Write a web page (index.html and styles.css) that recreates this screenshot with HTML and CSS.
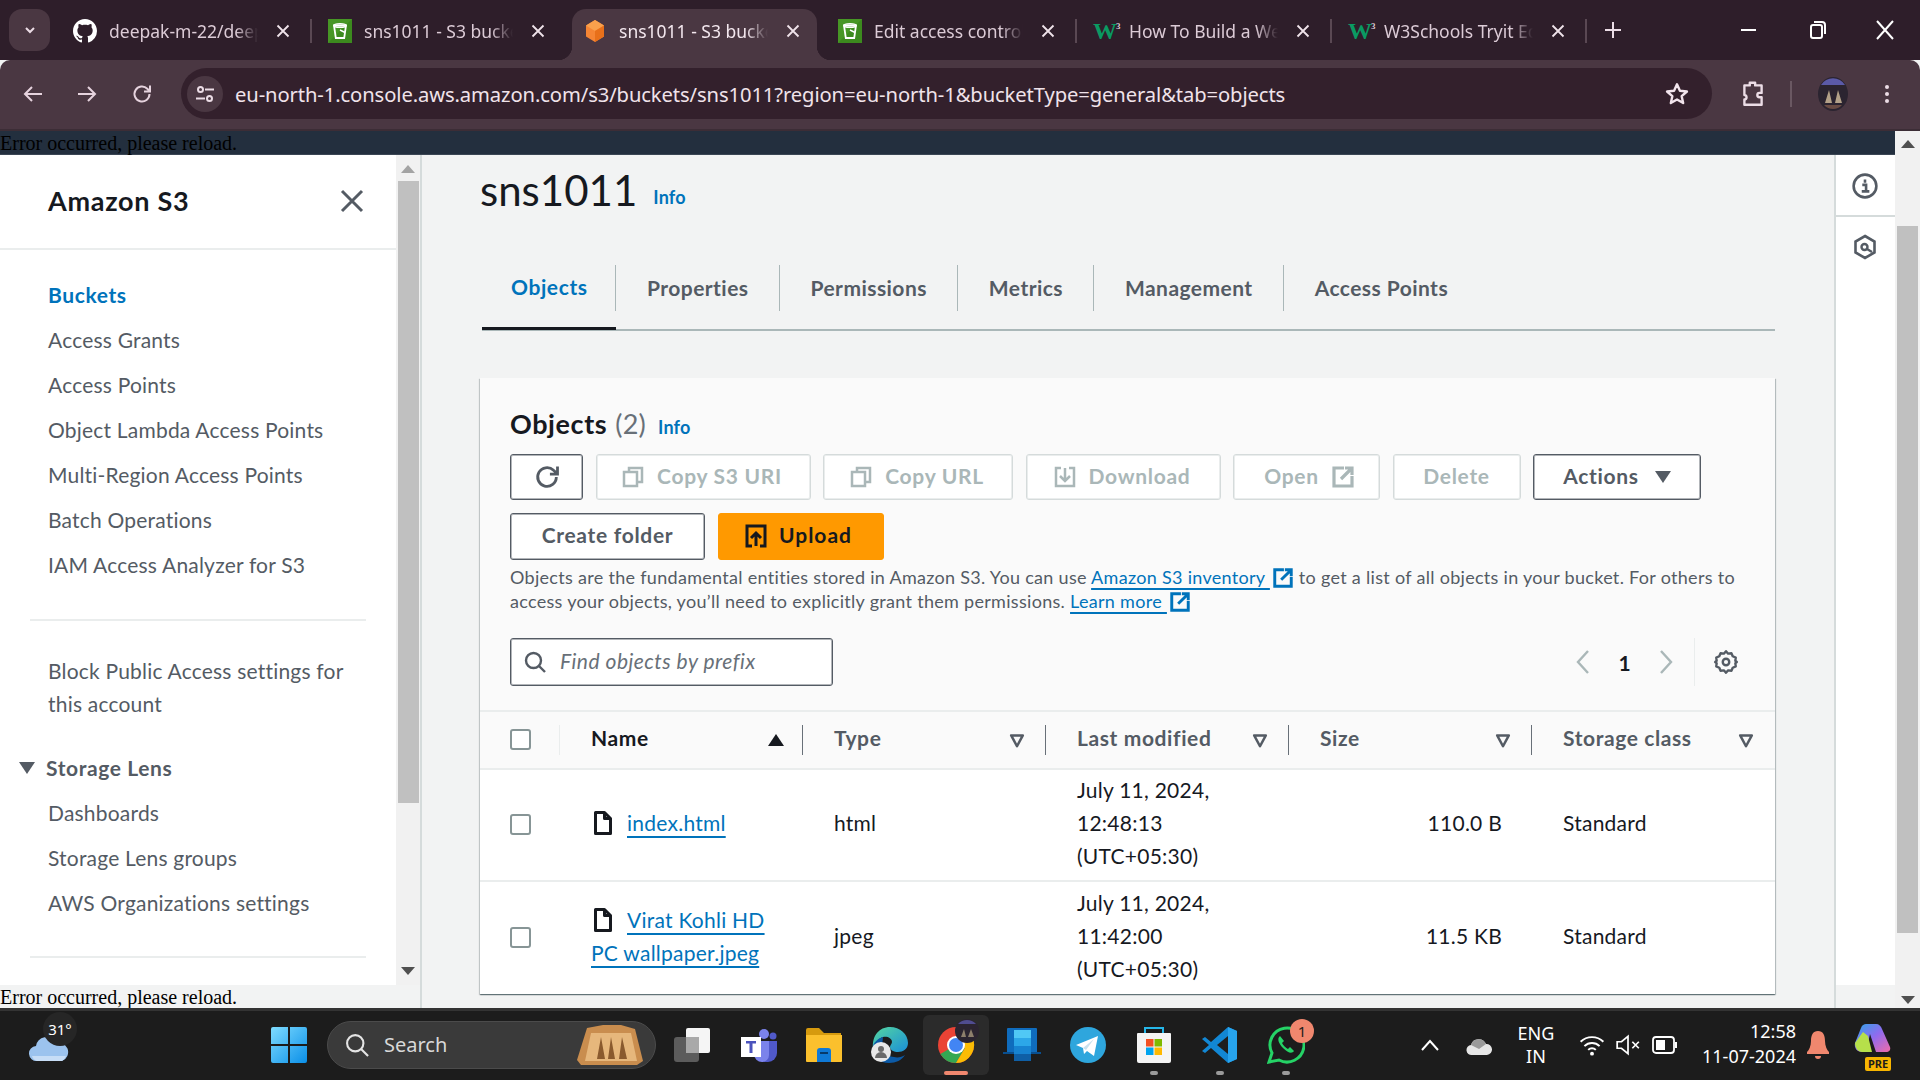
FILE: index.html
```html
<!DOCTYPE html>
<html lang="en">
<head>
<meta charset="utf-8">
<title>sns1011 - S3 bucket</title>
<link rel="stylesheet" href="styles.css">
</head>
<body>
<svg class="defs" width="0" height="0" aria-hidden="true">
  <symbol id="x" viewBox="0 0 24 24"><path d="M6 6l12 12M18 6L6 18" fill="none" stroke="currentColor" stroke-width="2"/></symbol>
  <symbol id="s3" viewBox="0 0 24 24"><rect width="24" height="24" fill="#3c8a1e"/><path d="M0 0h24L0 24z" fill="#4f9f2a" opacity=".6"/><path d="M6 6.5h12l-1.8 12.5H7.800z" fill="none" stroke="#fff" stroke-width="1.800"/><ellipse cx="12" cy="6.500" rx="6" ry="1.800" fill="none" stroke="#fff" stroke-width="1.600"/><path d="M12 11l5 2.500" stroke="#fff" stroke-width="1.500"/></symbol>
  <symbol id="sort" viewBox="0 0 24 24"><path d="M5 6.500h14L12 19.500z" fill="none" stroke="currentColor" stroke-width="3" stroke-linejoin="round"/></symbol>
  <symbol id="file" viewBox="0 0 18 24"><path d="M1.500 1.500h9l6 6v15h-15z M10.500 1.500v6h6" fill="none" stroke="#16191f" stroke-width="3" stroke-linejoin="round"/></symbol>
  <symbol id="ext" viewBox="0 0 24 24"><path d="M13 3H3v18h18V11" fill="none" stroke="currentColor" stroke-width="3.200"/><path d="M10 14L20 4M14 3h7v7" fill="none" stroke="currentColor" stroke-width="3.200"/></symbol>
  <symbol id="copy" viewBox="0 0 24 24"><path d="M8 7V3h13v14h-5" fill="none" stroke="currentColor" stroke-width="2.500"/><rect x="3" y="7" width="13" height="14" fill="none" stroke="currentColor" stroke-width="2.500"/></symbol>
</svg>

<header class="tabstrip">
  <button class="tabs-menu"><svg width="14" height="14" viewBox="0 0 14 14"><path d="M3 5l4 4 4-4" fill="none" stroke="#ecdde6" stroke-width="2"/></svg></button>
  <div class="tab">
    <svg class="fav" viewBox="0 0 16 16"><path fill="#fff" d="M8 0C3.580 0 0 3.580 0 8c0 3.540 2.290 6.530 5.470 7.590.4.070.55-.17.55-.38 0-.19-.01-.82-.01-1.490-2.010.37-2.530-.49-2.690-.94-.09-.23-.48-.94-.82-1.130-.28-.15-.68-.52-.01-.53.63-.01 1.080.58 1.230.82.720 1.210 1.870.87 2.330.66.070-.52.280-.87.510-1.070-1.780-.2-3.640-.89-3.640-3.950 0-.87.310-1.590.82-2.150-.08-.2-.36-1.020.08-2.120 0 0 .67-.21 2.200.82.640-.18 1.320-.27 2-.27s1.360.09 2 .27c1.530-1.040 2.200-.82 2.200-.82.44 1.100.16 1.920.08 2.120.51.560.82 1.270.82 2.150 0 3.070-1.870 3.750-3.650 3.950.29.250.54.730.54 1.480 0 1.070-.01 1.930-.01 2.200 0 .21.150.46.550.38A8.010 8.010 0 0 0 16 8c0-4.420-3.580-8-8-8z"/></svg>
    <span class="tab-title">deepak-m-22/deepak</span>
    <svg class="tab-x"><use href="#x"/></svg>
  </div>
  <div class="tab">
    <svg class="fav"><use href="#s3"/></svg>
    <span class="tab-title">sns1011 - S3 bucket</span>
    <svg class="tab-x"><use href="#x"/></svg>
  </div>
  <div class="tab active">
    <svg class="fav" viewBox="0 0 24 24"><path d="M12 1l9 5.500v11L12 23l-9-5.500v-11z" fill="#f58534"/><path d="M12 1l9 5.500L12 12 3 6.500z" fill="#f9a04c"/><path d="M12 12l9-5.500v11L12 23z" fill="#e8701a"/></svg>
    <span class="tab-title">sns1011 - S3 bucket</span>
    <svg class="tab-x"><use href="#x"/></svg>
  </div>
  <div class="tab">
    <svg class="fav"><use href="#s3"/></svg>
    <span class="tab-title">Edit access control list</span>
    <svg class="tab-x"><use href="#x"/></svg>
  </div>
  <div class="tab">
    <span class="fav w3">W<sup>3</sup></span>
    <span class="tab-title">How To Build a Website</span>
    <svg class="tab-x"><use href="#x"/></svg>
  </div>
  <div class="tab">
    <span class="fav w3">W<sup>3</sup></span>
    <span class="tab-title">W3Schools Tryit Editor</span>
    <svg class="tab-x"><use href="#x"/></svg>
  </div>
  <svg class="newtab" width="24" height="24" viewBox="0 0 24 24"><path d="M12 4v16M4 12h16" stroke="#ecdde6" stroke-width="2"/></svg>
  <div class="winctl">
    <svg width="24" height="24" viewBox="0 0 24 24"><path d="M4 12h15" stroke="#fff" stroke-width="2"/></svg>
    <svg width="24" height="24" viewBox="0 0 24 24"><rect x="6" y="7" width="11" height="13" rx="2" fill="none" stroke="#fff" stroke-width="2"/><path d="M9 4h8a3 3 0 0 1 3 3v9" fill="none" stroke="#fff" stroke-width="2"/></svg>
    <svg width="24" height="24" viewBox="0 0 24 24"><path d="M4 3l16 18M20 3L4 21" stroke="#fff" stroke-width="2"/></svg>
  </div>
</header>

<nav class="toolbar">
  <svg class="tool-ic" viewBox="0 0 24 24"><path d="M21 12H4M11 5l-7 7 7 7" fill="none" stroke="#e6d3de" stroke-width="2"/></svg>
  <svg class="tool-ic" viewBox="0 0 24 24"><path d="M3 12h17M13 5l7 7-7 7" fill="none" stroke="#e6d3de" stroke-width="2"/></svg>
  <svg class="tool-ic" viewBox="0 0 24 24"><path d="M19.500 12a7.500 7.500 0 1 1-2.200-5.300L20 9.400M20 3.500v6h-6" fill="none" stroke="#e6d3de" stroke-width="2"/></svg>
  <div class="omnibox">
    <span class="tune"><svg width="24" height="24" viewBox="0 0 24 24"><circle cx="7.500" cy="7.500" r="2.500" fill="none" stroke="#ecdde6" stroke-width="2"/><path d="M12 7.500h9M3 16.500h9" stroke="#ecdde6" stroke-width="2"/><circle cx="16.500" cy="16.500" r="2.500" fill="none" stroke="#ecdde6" stroke-width="2"/></svg></span>
    <span class="url">eu-north-1.console.aws.amazon.com/s3/buckets/sns1011?region=eu-north-1&amp;bucketType=general&amp;tab=objects</span>
    <svg class="star" width="26" height="26" viewBox="0 0 24 24"><path d="M12 3l2.700 6 6.500.7-4.900 4.300 1.400 6.400L12 17l-5.700 3.400 1.400-6.400-4.900-4.300 6.500-.7z" fill="none" stroke="#f2e4ec" stroke-width="2.200" stroke-linejoin="round"/></svg>
  </div>
  <svg class="ext-puzzle" width="26" height="28" viewBox="0 0 24 26"><path d="M4 5h5V2.500h5V5h6v7h-2a2 2 0 0 0 0 4h2v7H4v-5a2 2 0 0 0 0-4V5z" fill="none" stroke="#ecdde6" stroke-width="2.200" stroke-linejoin="round"/></svg>
  <span class="tool-sep"></span>
  <svg class="avatar" width="30" height="36" viewBox="0 0 30 36"><ellipse cx="15" cy="18" rx="15" ry="17" fill="#2b2430"/><path d="M3 9a14 14 0 0 1 24 0z" fill="#5b5aa8"/><path d="M7 27l4-13 3 13zM17 27l3-13 4 13z" fill="#b3a188"/><path d="M6 29a12 12 0 0 0 18 0z" fill="#6a4c44"/></svg>
  <svg class="kebab" width="24" height="24" viewBox="0 0 24 24"><circle cx="12" cy="5" r="2" fill="#ecdde6"/><circle cx="12" cy="12" r="2" fill="#ecdde6"/><circle cx="12" cy="19" r="2" fill="#ecdde6"/></svg>
</nav>

<div class="pagewrap">
  <div class="pagecol">
    <div class="err err-top">Error occurred, please reload.</div>
    <div class="console">
      <aside class="sidecol">
        <div class="sidebody">
          <div class="side">
            <div class="side-head">
              <h2>Amazon S3</h2>
              <svg class="side-x" width="24" height="24" viewBox="0 0 24 24"><path d="M2 2l20 20M22 2L2 22" fill="none" stroke="currentColor" stroke-width="3"/></svg>
            </div>
            <ul class="side-list side-first">
              <li class="on">Buckets</li>
              <li>Access Grants</li>
              <li>Access Points</li>
              <li>Object Lambda Access Points</li>
              <li>Multi-Region Access Points</li>
              <li>Batch Operations</li>
              <li>IAM Access Analyzer for S3</li>
            </ul>
            <hr class="side-hr hr-one">
            <p class="side-block">Block Public Access settings for this account</p>
            <div class="side-group"><svg width="16" height="14" viewBox="0 0 16 14"><path d="M0 1h16L8 13z" fill="#545b64"/></svg><span>Storage Lens</span></div>
            <ul class="side-list">
              <li>Dashboards</li>
              <li>Storage Lens groups</li>
              <li>AWS Organizations settings</li>
            </ul>
            <hr class="side-hr hr-two">
          </div>
          <div class="vscroll side-scroll">
            <svg class="sb-arrow" width="14" height="8" viewBox="0 0 14 8"><path d="M0 8l7-8 7 8z" fill="#a3a3a3"/></svg>
            <div class="thumb"></div>
            <svg class="sb-arrow" width="14" height="8" viewBox="0 0 14 8"><path d="M0 0l7 8 7-8z" fill="#505050"/></svg>
          </div>
        </div>
        <div class="err err-bot">Error occurred, please reload.</div>
      </aside>

      <main class="main">
        <div class="title-row"><h1>sns1011</h1><a class="info info-title">Info</a></div>
        <div class="tabs">
          <div class="stab sel">Objects</div>
          <div class="stab">Properties</div>
          <div class="stab">Permissions</div>
          <div class="stab">Metrics</div>
          <div class="stab">Management</div>
          <div class="stab">Access Points</div>
        </div>
        <section class="card">
          <div class="card-top">
            <div class="obj-head"><h3>Objects</h3><span class="count">(2)</span><a class="info">Info</a></div>
            <div class="btnrow">
              <button class="btn b-refresh"><svg width="28" height="28" viewBox="0 0 24 24"><path d="M20 12a8 8 0 1 1-2.400-5.700L20.500 9M21 3v6.500h-6.500" fill="none" stroke="#545b64" stroke-width="2.400"/></svg></button>
              <button class="btn off b-s3"><svg width="24" height="24"><use href="#copy"/></svg>Copy S3 URI</button>
              <button class="btn off b-url"><svg width="24" height="24"><use href="#copy"/></svg>Copy URL</button>
              <button class="btn off b-dl"><svg width="24" height="24" viewBox="0 0 24 24"><path d="M8 3H3v18h18V3h-5M12 3v12M7 11l5 5 5-5" fill="none" stroke="currentColor" stroke-width="2.500"/></svg>Download</button>
              <button class="btn off b-open">Open<svg width="24" height="24"><use href="#ext"/></svg></button>
              <button class="btn off b-del">Delete</button>
              <button class="btn b-act">Actions<svg width="16" height="14" viewBox="0 0 16 14"><path d="M0 1h16L8 13z" fill="#545b64"/></svg></button>
            </div>
            <div class="btnrow row-two">
              <button class="btn b-folder">Create folder</button>
              <button class="btn b-upload"><svg width="22" height="24" viewBox="0 0 22 24"><path d="M7 22H2V2h18v20h-5M11 22V10M6 14l5-5 5 5" fill="none" stroke="#16191f" stroke-width="3"/></svg>Upload</button>
            </div>
            <p class="desc">Objects are the fundamental entities stored in Amazon S3. You can use <a>Amazon S3 inventory <svg width="22" height="22"><use href="#ext"/></svg></a> to get a list of all objects in your bucket. For others to access your objects, you’ll need to explicitly grant them permissions. <a>Learn more <svg width="22" height="22"><use href="#ext"/></svg></a></p>
            <div class="findrow">
              <div class="find"><svg width="24" height="24" viewBox="0 0 24 24"><circle cx="10.500" cy="10.500" r="7.500" fill="none" stroke="#545b64" stroke-width="2.400"/><path d="M16 16l6 6" stroke="#545b64" stroke-width="2.400"/></svg><span>Find objects by prefix</span></div>
              <div class="pager">
                <svg width="18" height="26" viewBox="0 0 18 26"><path d="M14 2L4 13l10 11" fill="none" stroke="#aab7b8" stroke-width="2.400"/></svg>
                <span>1</span>
                <svg width="18" height="26" viewBox="0 0 18 26"><path d="M4 2l10 11L4 24" fill="none" stroke="#aab7b8" stroke-width="2.400"/></svg>
                <i class="pager-sep"></i>
                <svg width="26" height="26" viewBox="0 0 24 24"><path d="M12 2l2 2.300 3-.4 1.200 2.800 2.800 1.200-.4 3L22 12l-1.400 1.100.4 3-2.800 1.200L17 20.100l-3-.4L12 22l-2-2.300-3 .4-1.200-2.800L3 16.100l.4-3L2 12l1.400-1.100-.4-3 2.800-1.200L7 3.900l3 .4z" fill="none" stroke="#545b64" stroke-width="2.200" stroke-linejoin="round"/><circle cx="12" cy="12" r="3" fill="none" stroke="#545b64" stroke-width="2.200"/></svg>
              </div>
            </div>
          </div>
          <table class="objects">
            <colgroup><col class="c0"><col class="cn"><col class="cn"><col class="cn"><col class="cn"><col class="cn"></colgroup>
            <thead>
              <tr>
                <th class="chk"><span class="box"></span></th>
                <th class="dark"><div class="th-in">Name<svg width="16" height="14" viewBox="0 0 16 14"><path d="M0 13h16L8 1z" fill="#16191f"/></svg></div></th>
                <th><div class="th-in">Type<svg width="20" height="20"><use href="#sort"/></svg></div></th>
                <th><div class="th-in">Last modified<svg width="20" height="20"><use href="#sort"/></svg></div></th>
                <th><div class="th-in">Size<svg width="20" height="20"><use href="#sort"/></svg></div></th>
                <th class="last"><div class="th-in">Storage class<svg width="20" height="20"><use href="#sort"/></svg></div></th>
              </tr>
            </thead>
            <tbody>
              <tr>
                <td class="chk"><span class="box"></span></td>
                <td class="namec"><svg class="fileic" width="18" height="24"><use href="#file"/></svg><a>index.html</a></td>
                <td>html</td>
                <td>July 11, 2024,<br>12:48:13<br>(UTC+05:30)</td>
                <td class="num">110.0 B</td>
                <td>Standard</td>
              </tr>
              <tr>
                <td class="chk"><span class="box"></span></td>
                <td class="namec"><svg class="fileic" width="18" height="24"><use href="#file"/></svg><a>Virat Kohli HD<br>PC wallpaper.jpeg</a></td>
                <td>jpeg</td>
                <td>July 11, 2024,<br>11:42:00<br>(UTC+05:30)</td>
                <td class="num">11.5 KB</td>
                <td>Standard</td>
              </tr>
            </tbody>
          </table>
        </section>
      </main>

      <aside class="rail">
        <div class="rail-in">
          <div class="rail-item bordered"><svg width="26" height="26" viewBox="0 0 24 24"><circle cx="12" cy="12" r="10.500" fill="none" stroke="#545b64" stroke-width="2.400"/><path d="M12 6v3M9.500 11H13v6M9 17h7" fill="none" stroke="#545b64" stroke-width="2.400"/></svg></div>
          <div class="rail-item"><svg width="24" height="26" viewBox="0 0 24 26"><path d="M12 2l9.500 5.500v11L12 24l-9.500-5.500v-11z" fill="none" stroke="#545b64" stroke-width="2.600"/><circle cx="11.500" cy="13" r="3" fill="none" stroke="#545b64" stroke-width="2.400"/><path d="M14 15l5 3" stroke="#545b64" stroke-width="2.400"/></svg></div>
        </div>
      </aside>
    </div>
  </div>
  <div class="vscroll page-scroll">
    <svg class="sb-arrow" width="14" height="8" viewBox="0 0 14 8"><path d="M0 8l7-8 7 8z" fill="#505050"/></svg>
    <div class="thumb"></div>
    <svg class="sb-arrow" width="14" height="8" viewBox="0 0 14 8"><path d="M0 0l7 8 7-8z" fill="#505050"/></svg>
  </div>
</div>

<footer class="taskbar">
  <div class="weather">
    <span class="temp">31°</span>
    <svg width="40" height="36" viewBox="0 0 40 36"><rect x="17" y="4" width="12" height="10" fill="#d9722c"/><path d="M8 34a7.500 7.500 0 0 1-1-15 10 10 0 0 1 19-3 9 9 0 0 1 7 18z" fill="#9cc3ee"/><path d="M8 34a7 7 0 0 1-5-5h34a9 9 0 0 1-4 5z" fill="#c7ddf6"/></svg>
  </div>
  <div class="winlogo"><svg width="36" height="36" viewBox="0 0 36 36"><defs><linearGradient id="wl" x1="0" y1="0" x2="1" y2="1"><stop offset="0" stop-color="#7fdcff"/><stop offset="1" stop-color="#0a8fe8"/></linearGradient></defs><path d="M0 2a2 2 0 0 1 2-2h15v17H0zM19 0h15a2 2 0 0 1 2 2v15H19zM0 19h17v17H2a2 2 0 0 1-2-2zM19 19h17v15a2 2 0 0 1-2 2H19z" fill="url(#wl)"/></svg></div>
  <div class="tbsearch">
    <svg width="28" height="28" viewBox="0 0 24 24"><circle cx="10.500" cy="10.500" r="7" fill="none" stroke="#e4e4e4" stroke-width="1.800"/><path d="M15.500 15.500l6 6" stroke="#e4e4e4" stroke-width="1.800"/></svg>
    <span>Search</span>
    <svg class="relief" width="68" height="40" viewBox="0 0 68 40"><path d="M10 3l16-3h18l14 4 8 32-6 4H4l-4-5z" fill="#c98d4e"/><path d="M14 8h40l6 28H8z" fill="#e6b77c"/><path d="M20 34l4-22 4 22zM31 34l3-22 4 22zM42 34l3-22 5 22z" fill="#8a5a2e"/></svg>
  </div>
  <div class="slot"><svg width="38" height="36" viewBox="0 0 38 36"><rect x="1" y="10" width="25" height="25" rx="3" fill="#5c5c5c"/><rect x="13" y="1" width="24" height="25" rx="2" fill="#f5f5f5"/><rect x="13" y="10" width="13" height="16" fill="#a9a9a9"/></svg></div>
  <div class="slot"><svg width="38" height="36" viewBox="0 0 38 36"><circle cx="25" cy="7" r="5" fill="#7b83eb"/><circle cx="34" cy="9" r="3.500" fill="#5059c9"/><path d="M15 14h23v12a9 9 0 0 1-9 9h-3a11 11 0 0 1-11-11z" fill="#5059c9"/><path d="M15 14h15v14a7 7 0 0 1-7 7 8 8 0 0 1-8-8z" fill="#7b83eb"/><rect x="2" y="10" width="20" height="20" fill="#fff"/><path d="M7 14h10v2.500h-3.500V26h-3v-9.500H7z" fill="#4b53bc"/></svg></div>
  <div class="slot"><svg width="38" height="36" viewBox="0 0 38 36"><path d="M1 3a2 2 0 0 1 2-2h11l5 5h17v8H1z" fill="#d69a0e"/><path d="M1 8h36v26a1 1 0 0 1-1 1H2a1 1 0 0 1-1-1z" fill="#fbc02d"/><path d="M12 24a3 3 0 0 1 3-3h8a3 3 0 0 1 3 3v11H12z" fill="#0f79d6"/><rect x="15" y="25" width="8" height="2" fill="#073a6b"/></svg></div>
  <div class="slot"><svg width="38" height="38" viewBox="0 0 38 38"><defs><linearGradient id="ed" x1="0" y1="0" x2="1" y2="1"><stop offset="0" stop-color="#54d6a0"/><stop offset="1" stop-color="#1a8fd8"/></linearGradient></defs><path d="M19 1c10 0 18 7 18 16 0 6-5 9-10 9-4 0-8-2-8-5 0-2 2-3 2-5 0-4-5-6-9-5C8 12 3 18 2 22 1 10 8 1 19 1z" fill="url(#ed)"/><path d="M2 22c0 9 7 15 16 15 7 0 13-3 16-8-3 2-7 3-11 2C14 30 10 24 12 11 6 13 2 17 2 22z" fill="#0c5aa6"/><circle cx="10" cy="26" r="10" fill="#e8e8e8"/><circle cx="10" cy="23" r="3" fill="#6a6a6a"/><path d="M4 32a6 6 0 0 1 12 0z" fill="#6a6a6a"/></svg></div>
  <div class="slot slot-active">
    <svg width="38" height="38" viewBox="0 0 38 38"><circle cx="19" cy="19" r="18" fill="#ea4335"/><path d="M19 19L3.400 28A18 18 0 0 0 19 37l9-15z" fill="#34a853"/><path d="M19 19l9 3-9 15a18 18 0 0 0 15.600-27H19z" fill="#fbbc04"/><circle cx="19" cy="19" r="9" fill="#fff"/><circle cx="19" cy="19" r="7" fill="#4285f4"/></svg>
    <svg class="chrome-av" width="24" height="24" viewBox="0 0 24 24"><circle cx="12" cy="12" r="12" fill="#2b2430"/><path d="M3 5a12 12 0 0 1 18 0z" fill="#504c90"/><path d="M6 18l3-8 2 8zM13 18l3-8 3 8z" fill="#8d7f6c"/></svg>
    <i class="pill"></i>
  </div>
  <div class="slot"><svg width="38" height="36" viewBox="0 0 38 36"><path d="M5 1h28a1 1 0 0 1 1 1v23H4V2a1 1 0 0 1 1-1z" fill="#0f6cbd"/><rect x="0" y="25" width="38" height="2" fill="#0a4f8f"/><rect x="11" y="3" width="17" height="8" fill="#50c8f5"/><rect x="11" y="11" width="17" height="8" fill="#2ca7e8"/><rect x="11" y="19" width="17" height="8" fill="#1783d1"/><rect x="11" y="27" width="17" height="7" fill="#0f5fa6"/></svg></div>
  <div class="slot"><svg width="36" height="36" viewBox="0 0 36 36"><circle cx="18" cy="18" r="18" fill="#2ea6dd"/><path d="M6 18l22-9-4 20-7-5-3 3-1-6z" fill="#fff"/><path d="M13 21l11-9-8 11z" fill="#c8e1ee"/></svg></div>
  <div class="slot dot"><svg width="36" height="38" viewBox="0 0 36 38"><path d="M9 7V2h18v5" fill="none" stroke="#25b6e8" stroke-width="2"/><path d="M2 7h32a1 1 0 0 1 1 1v27a2 2 0 0 1-2 2H3a2 2 0 0 1-2-2V8a1 1 0 0 1 1-1z" fill="#f4f4f4"/><rect x="10" y="13" width="7.500" height="7.500" fill="#f25022"/><rect x="18.500" y="13" width="7.500" height="7.500" fill="#7fba00"/><rect x="10" y="21.500" width="7.500" height="7.500" fill="#00a4ef"/><rect x="18.500" y="21.500" width="7.500" height="7.500" fill="#ffb900"/></svg></div>
  <div class="slot dot"><svg width="38" height="38" viewBox="0 0 38 38"><path d="M27 1l9 4v28l-9 4L10 22l-6 5-3-2 7-6-7-6 3-2 6 5z" fill="#1287d4"/><path d="M27 1l9 4v28l-9 4z" fill="#27a4ee"/><path d="M27 10L16 19l11 9z" fill="#1e1e1e"/></svg></div>
  <div class="slot dot">
    <svg width="38" height="38" viewBox="0 0 38 38"><path d="M2 36l3-9A17 17 0 1 1 12 34z" fill="none" stroke="#25d366" stroke-width="3"/><path d="M13 10c-3 2-2 7 3 12s9 6 11 3l-4-4-2 2c-2-1-5-4-6-6l2-2z" fill="#25d366"/></svg>
    <b class="badge">1</b>
  </div>
  <div class="tray">
    <svg class="t-chev" width="22" height="14" viewBox="0 0 22 14"><path d="M3 12l8-9 8 9" fill="none" stroke="#fff" stroke-width="2"/></svg>
    <svg class="t-cloud" width="26" height="22" viewBox="0 0 26 22"><path d="M6 21a5 5 0 0 1-1-10 8 8 0 0 1 15-1 5.500 5.500 0 0 1 1 11z" fill="#e6e6e6"/><path d="M5 11a8 8 0 0 1 15-1l-7 5z" fill="#9a9a9a"/></svg>
    <div class="t-lang">ENG<br>IN</div>
    <svg class="t-wifi" width="26" height="26" viewBox="0 0 24 24"><path d="M1.500 9a15 15 0 0 1 21 0M5 13a10 10 0 0 1 14 0M8.500 16.500a5 5 0 0 1 7 0" fill="none" stroke="#fff" stroke-width="1.800"/><circle cx="12" cy="20" r="1.800" fill="#fff"/></svg>
    <svg class="t-mute" width="26" height="26" viewBox="0 0 24 24"><path d="M2 9h4l6-5v16l-6-5H2z" fill="none" stroke="#fff" stroke-width="1.600"/><path d="M16 9l6 6M22 9l-6 6" stroke="#fff" stroke-width="1.600"/></svg>
    <svg class="t-batt" width="26" height="24" viewBox="0 0 26 24"><rect x="1" y="4" width="21" height="16" rx="3" fill="none" stroke="#fff" stroke-width="1.800"/><rect x="4" y="7" width="9" height="10" fill="#fff"/><rect x="23" y="9" width="2" height="6" fill="#fff"/></svg>
    <div class="t-clock">12:58<br>11-07-2024</div>
    <svg class="t-bell" width="24" height="30" viewBox="0 0 24 30"><path d="M12 1c5 0 7 4 7 10 0 5 2 9 4 11v2H1v-2c2-2 4-6 4-11 0-6 2-10 7-10z" fill="#f0876e"/><path d="M9 26h6a3 3 0 0 1-6 0z" fill="#f0876e"/></svg>
    <div class="t-copilot">
      <svg width="38" height="36" viewBox="0 0 38 36"><defs><linearGradient id="cp" x1="0" y1="0" x2="1" y2="1"><stop offset="0" stop-color="#2aa7e8"/><stop offset=".5" stop-color="#8f6bef"/><stop offset="1" stop-color="#f06ba8"/></linearGradient></defs><path d="M12 1h10c3 0 5 2 6 5l8 18c1 3-1 5-4 5H22l-6-18-4 18H8c-5 0-8-4-7-9l6-15c1-3 3-4 5-4z" fill="url(#cp)"/><path d="M1 20c0 5 3 9 7 9h10l-4-16-5-4z" fill="#b6e04a"/></svg>
      <b class="pre">PRE</b>
    </div>
  </div>
</footer>
</body>
</html>
```

FILE: styles.css
```css
* { box-sizing: border-box; }
html, body { margin: 0; padding: 0; }
body { width: 1920px; height: 1080px; overflow: hidden; display: flex; flex-direction: column; background: #f2f3f3; font-family: "Lato", "Noto Sans", sans-serif; letter-spacing: .2px; }
.defs { position: absolute; }
h1, h2, h3, p, ul { margin: 0; padding: 0; }
ul { list-style: none; }
button { font-family: inherit; }

/* browser chrome */
.tabstrip { height: 60px; background: #2e1e2a; display: flex; align-items: flex-end; padding-left: 9px; flex: none; letter-spacing: 0; }
.tabs-menu { width: 41px; height: 42px; margin: 0 12px 9px 0; border: 0; border-radius: 13px; background: #4a3742; display: flex; align-items: center; justify-content: center; padding: 0; }
.tab { position: relative; width: 245px; height: 51px; margin-right: 10px; padding: 0 8px 8px 10px; display: flex; align-items: center; color: #dccbd6; font: 17.500px "Noto Sans", sans-serif; }
.tab::after { content: ""; position: absolute; right: -5px; top: 10px; width: 2px; height: 24px; background: #5a4853; }
.tab:nth-of-type(2)::after, .tab.active::after { background: transparent; }
.tab.active { background: #4a3742; border-radius: 14px 14px 0 0; color: #f3e7ee; }
.tab.active::before { content: ""; position: absolute; left: -14px; bottom: 0; width: 14px; height: 14px; background: radial-gradient(circle at 0 0, transparent 14px, #4a3742 14.500px); }
.tab.active::after { right: -14px; left: auto; top: auto; bottom: 0; width: 14px; height: 14px; background: radial-gradient(circle at 100% 0, transparent 14px, #4a3742 14.500px); }
.fav { width: 24px; height: 24px; flex: none; margin-right: 12px; margin-left: 1px; }
.w3 { color: #0a9a62; font: bold 24px/24px "Liberation Serif", serif; letter-spacing: -1px; white-space: nowrap; }
.w3 sup { font-size: 9px; color: #dccbd6; vertical-align: 10px; line-height: 0; }
.tab-title { flex: none; width: 149px; overflow: hidden; white-space: nowrap; -webkit-mask-image: linear-gradient(90deg, #000 85%, transparent 100%); mask-image: linear-gradient(90deg, #000 85%, transparent 100%); }
.tab-x { width: 22px; height: 22px; margin-left: 14px; color: #f0e3ea; flex: none; }
.newtab { margin: 0 0 18px 9px; flex: none; }
.winctl { margin-left: auto; display: flex; gap: 44px; padding: 0 23px 0 0; margin-bottom: 18px; }
.toolbar { height: 71px; flex: none; background: #4a3742; border-radius: 10px 10px 0 0; border-bottom: 2px solid #3c2d36; display: flex; align-items: center; padding: 0 20px 2px 21px; gap: 0; letter-spacing: 0; }
.tool-ic { width: 24px; height: 24px; margin-right: 30px; flex: none; }
.tool-ic:nth-of-type(2) { margin-right: 31px; }
.tool-ic:nth-of-type(3) { margin-right: 27px; }
.omnibox { width: 1531px; height: 51px; border-radius: 26px; background: #33202c; display: flex; align-items: center; padding-left: 6px; flex: none; }
.tune { width: 36px; height: 36px; border-radius: 50%; background: #4a3742; display: flex; align-items: center; justify-content: center; flex: none; }
.url { margin-left: 12px; color: #f0e3ea; font: 20.200px "Noto Sans", sans-serif; white-space: nowrap; letter-spacing: -.1px; }
.star { margin-left: auto; margin-right: 22px; }
.ext-puzzle { margin-left: 28px; flex: none; }
.tool-sep { width: 2px; height: 26px; background: #6a5862; margin-left: 24px; flex: none; }
.avatar { margin-left: 26px; flex: none; }
.kebab { margin-left: 27px; flex: none; }

/* page */
.pagewrap { height: 877px; display: flex; flex: none; }
.pagecol { width: 1895px; display: flex; flex-direction: column; }
.err { font: 20px/24px "Liberation Serif", serif; color: #000; white-space: nowrap; letter-spacing: 0; }
.err-top { height: 24px; background: #232f3e; flex: none; border-bottom: 1px solid #3b4654; }
.err-bot { height: 23px; line-height: 25px; }
.console { height: 853px; display: flex; }
.vscroll { display: flex; flex-direction: column; align-items: center; background: #f1f1f1; }
.thumb { background: #c0c0c0; }

/* sidebar */
.sidecol { width: 422px; flex: none; border-right: 2px solid #d5dbdb; display: flex; flex-direction: column; }
.sidebody { height: 830px; display: flex; flex: none; }
.side { width: 396px; flex: none; background: #fff; overflow: hidden; }
.side-head { height: 95px; border-bottom: 2px solid #eaeded; padding: 0 32px 2px 48px; display: flex; align-items: center; justify-content: space-between; }
.side-head h2 { font-size: 27px; font-weight: 700; color: #16191f; line-height: 33px; letter-spacing: .7px; }
.side-x { color: #545b64; }
.side-list { font-size: 21px; line-height: 33px; color: #545b64; padding-left: 48px; }
.side-list li { height: 45px; display: flex; align-items: center; }
.side-first { padding-top: 22px; }
.side-list .on { color: #0073bb; font-weight: 700; letter-spacing: .6px; }
.side-hr { border: 0; height: 2px; background: #eaeded; margin: 0 30px; }
.hr-one { margin-top: 32px; }
.hr-two { margin-top: 31px; }
.side-block { font-size: 21px; line-height: 33px; color: #545b64; padding: 33px 40px 0 48px; }
.side-group { display: flex; align-items: center; gap: 11px; padding: 25px 0 0 19px; height: 70px; font-size: 21px; font-weight: 700; color: #545b64; letter-spacing: .6px; }
.side-scroll { width: 24px; flex: none; padding: 10px 0 10px; }
.side-scroll .thumb { width: 21px; height: 622px; margin: 8px 0 0; }
.side-scroll .sb-arrow:last-child { margin-top: auto; }
.page-scroll { width: 25px; flex: none; padding: 9px 0 4px; }
.page-scroll .thumb { width: 21px; height: 707px; margin-top: 78px; }
.page-scroll .sb-arrow:last-child { margin-top: auto; }

/* main */
.main { width: 1412px; flex: none; padding-left: 58px; overflow: hidden; }
.title-row { height: 70px; display: flex; align-items: center; }
.title-row h1 { font-size: 42px; font-weight: 400; color: #16191f; line-height: 54px; letter-spacing: 0; }
.info { color: #0073bb; font-size: 18px; font-weight: 700; }
.info-title { margin: 14px 0 0 16px; }
.tabs { margin: 40px 0 0 2px; width: 1293px; height: 66px; border-bottom: 2px solid #aab7b8; display: flex; }
.stab { position: relative; height: 65px; padding: 0 31px 21px; display: flex; align-items: center; font-size: 21px; font-weight: 700; color: #545b64; margin-bottom: -2px; letter-spacing: .45px; }
.stab:not(:last-child)::after { content: ""; position: absolute; right: 0; top: 0; height: 46px; width: 1px; background: #aab7b8; }
.sel { color: #0073bb; border-bottom: 3px solid #16191f; width: 134px; padding-left: 29px; padding-bottom: 19px; letter-spacing: .6px; }
.card { margin-top: 47px; width: 1295px; height: 616px; background: #fafafa; box-shadow: 0 1px 1px rgba(0, 28, 36, .4), 1px 1px 1px rgba(0, 28, 36, .2), -1px 1px 1px rgba(0, 28, 36, .15); }
.card-top { padding: 27px 30px 0; }
.obj-head { height: 36px; display: flex; align-items: center; }
.obj-head h3 { font-size: 27px; font-weight: 700; color: #16191f; letter-spacing: .6px; }
.count { font-size: 27px; color: #687078; margin-left: 8px; }
.obj-head .info { margin: 7px 0 0 12px; }
.btnrow { display: flex; gap: 12.500px; margin-top: 13px; height: 46px; }
.row-two { margin-top: 13px; height: 47px; }
.btn { height: 100%; border: 1px solid #545b64; box-shadow: inset 0 0 0 1px rgba(84, 91, 100, .45); border-radius: 3px; background: #fff; color: #545b64; font-size: 21px; font-weight: 700; letter-spacing: .7px; display: flex; align-items: center; justify-content: center; gap: 12px; padding: 0 0 3px; flex: none; }
.btn svg { margin-top: 3px; }
.btn.off { border-color: #d5dbdb; box-shadow: inset 0 0 0 1px rgba(213, 219, 219, .5); color: #aab7b8; }
.b-refresh { width: 73px; }
.b-s3 { width: 215px; padding-right: 3px; }
.b-url { width: 190px; padding-right: 3px; }
.b-dl { width: 195px; padding-right: 3px; }
.b-open { width: 147px; padding-left: 6px; }
.b-del { width: 128px; }
.b-act { width: 168px; gap: 16px; }
.b-folder { width: 195px; padding-bottom: 4px; }
.b-upload { width: 166px; background: #f90; border-color: #f90; box-shadow: none; color: #16191f; letter-spacing: 1px; padding: 0 4px 4px 0; }
.desc { margin-top: 5px; font-size: 18px; line-height: 24px; color: #545b64; letter-spacing: .3px; }
.desc a { color: #0073bb; text-decoration: underline; text-decoration-thickness: 2px; text-underline-offset: 4px; }
.desc svg { vertical-align: -5px; margin-left: 2px; }
.findrow { margin-top: 25px; height: 48px; display: flex; align-items: center; justify-content: space-between; }
.find { width: 323px; height: 48px; border: 1px solid #545b64; box-shadow: inset 0 0 0 1px rgba(84, 91, 100, .45); border-radius: 3px; background: #fff; display: flex; align-items: center; padding-left: 12px; gap: 13px; font-size: 21px; font-style: italic; color: #687078; letter-spacing: .5px; }
.find span { margin-top: -3px; }
.pager { display: flex; align-items: center; padding-right: 6px; font-size: 21px; font-weight: 700; color: #16191f; }
.pager span { margin: 0 26px 0 27px; }
.pager-sep { width: 1px; height: 48px; background: #eaeded; margin: 0 18px 0 19px; }

/* table */
.objects { margin-top: 24px; width: 1295px; border-collapse: collapse; table-layout: fixed; font-size: 21px; line-height: 33px; color: #16191f; }
.c0 { width: 80px; }
.cn { width: 243px; }
.objects th { position: relative; height: 58px; padding: 0 30px 0 31px; text-align: left; background: #fafafa; color: #545b64; font-weight: 700; border-top: 2px solid #eaeded; border-bottom: 2px solid #eaeded; letter-spacing: .6px; }
.objects th.dark { color: #16191f; }
.objects th::after { content: ""; position: absolute; right: 0; top: 13px; height: 30px; width: 1px; background: #687078; }
.objects th.last::after { display: none; }
.objects th.chk::after { background: #eaeded; }
.th-in { display: flex; align-items: center; justify-content: space-between; margin-right: -11px; padding-bottom: 5px; }
.th-in svg { margin-top: 4px; }
.objects td { height: 112px; padding: 0 30px 5px 31px; background: #fff; vertical-align: middle; border-bottom: 2px solid #eaeded; letter-spacing: .25px; }
.objects tbody tr:last-child td { height: 113px; border-bottom: 0; }
.objects .chk, .objects tbody .chk { padding: 0 0 2px 30px; }
.box { display: block; width: 21px; height: 21px; border: 2px solid #879596; border-radius: 3px; background: #fff; }
.objects th .box { background: #fff; }
.objects td.num { text-align: right; }
.namec a { color: #0073bb; text-decoration: underline; text-decoration-thickness: 2px; text-underline-offset: 5px; }
.fileic { vertical-align: -4px; margin: 0 15px 0 3px; }

/* rail */
.rail { width: 61px; flex: none; border-left: 2px solid #d5dbdb; }
.rail-in { height: 830px; background: #fff; }
.rail-item { height: 61px; display: flex; align-items: center; justify-content: center; padding: 0 2px 2px 0; }
.rail-item.bordered { height: 62px; border-bottom: 2px solid #d5dbdb; padding: 2px 2px 0 0; }

/* taskbar */
.taskbar { height: 72px; flex: none; background: #1c1c1c; border-top: 3px solid #333; padding-bottom: 2px; display: flex; align-items: center; color: #fff; font-family: "Noto Sans", sans-serif; letter-spacing: 0; }
.weather { position: relative; width: 262px; flex: none; padding: 0 0 0 29px; height: 67px; display: flex; align-items: center; }
.temp { position: absolute; left: 43px; top: 1px; width: 34px; height: 34px; border-radius: 50%; background: #262626; font-size: 15px; line-height: 34px; text-align: center; }
.winlogo { width: 65px; flex: none; display: flex; justify-content: flex-start; padding-left: 9px; }
.tbsearch { width: 329px; height: 48px; border-radius: 24px; background: #3a3a3a; border: 1px solid #4b4b4b; display: flex; align-items: center; padding-left: 15px; font-size: 20px; color: #d8d8d8; flex: none; margin-right: 3px; }
.tbsearch span { margin-left: 13px; }
.relief { margin-left: auto; margin-right: 10px; }
.slot { position: relative; width: 66px; height: 60px; flex: none; display: flex; align-items: center; justify-content: center; }
.slot-active { background: #2b2b2b; border-radius: 6px; }
.chrome-av { position: absolute; right: 10px; top: 4px; }
.pill { position: absolute; left: 21px; bottom: 0; width: 24px; height: 4px; border-radius: 2px; background: #f0876e; }
.dot::after { content: ""; position: absolute; left: 29px; bottom: 0; width: 8px; height: 4px; border-radius: 2px; background: #9a9a9a; }
.badge { position: absolute; left: 37px; top: 4px; width: 24px; height: 24px; border-radius: 50%; background: #f0876e; color: #1c1c1c; font-size: 15px; font-weight: 400; line-height: 24px; text-align: center; }
.tray { flex: 1; display: flex; align-items: center; }
.t-chev { margin-left: 100px; }
.t-cloud { margin-left: 25px; }
.t-lang { width: 50px; margin-left: 19px; text-align: center; font-size: 18px; line-height: 23px; }
.t-wifi { margin-left: 18px; }
.t-mute { margin-left: 10px; }
.t-batt { margin-left: 11px; }
.t-clock { width: 112px; margin-left: 6px; text-align: right; font-size: 18px; line-height: 25px; margin-top: -2px; }
.t-bell { margin-left: 10px; }
.t-copilot { position: relative; margin-left: 24px; height: 44px; }
.pre { position: absolute; left: 11px; bottom: -4px; background: #f7b500; color: #1c1c1c; font-size: 11px; line-height: 14px; padding: 0 3px; border-radius: 2px; }
```
